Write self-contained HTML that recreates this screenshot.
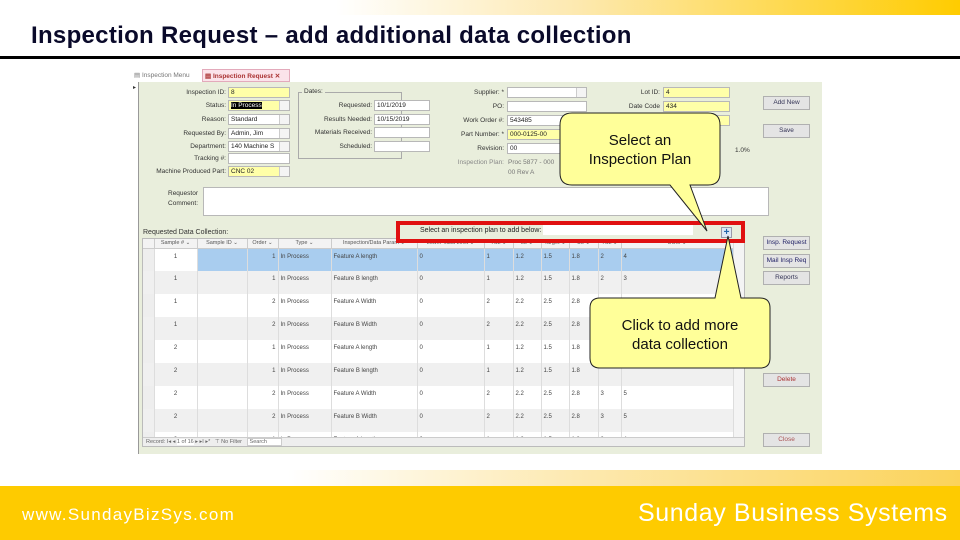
<!DOCTYPE html>
<html><head><meta charset="utf-8"><style>
*{margin:0;padding:0;box-sizing:border-box}
body{width:960px;height:540px;position:relative;overflow:hidden;background:#fff;font-family:"Liberation Sans",sans-serif}
.a{position:absolute}
.t{font-size:6.5px;color:#333;white-space:nowrap}
.f{position:absolute;height:11px;border:1px solid #b8b8b8;background:#fff;font-size:6.5px;line-height:9px;padding-left:2px;color:#222;white-space:nowrap;overflow:hidden}
.y{background:#ffffa8}
.l{position:absolute;font-size:6.5px;color:#333;text-align:right;white-space:nowrap}
.dd::after{content:"";position:absolute;right:0;top:0;width:9px;height:9px;border-left:1px solid #ccc;background:#f4f4f4}
.b{position:absolute;left:763px;width:47px;height:14px;background:#e4e4e4;border:1px solid #b0b0b0;font-size:6.5px;text-align:center;line-height:12px;color:#335}
table{border-collapse:collapse;table-layout:fixed}
td{height:23px;font-size:6px;color:#444;vertical-align:top;padding:5px 2px 0;border-right:1px solid #ddd;white-space:nowrap;overflow:hidden}
tr.g td{background:#f0f0f0}
tr.s td{background:#a9cdef}
th{height:9px;font-size:5.5px;font-weight:normal;color:#555;background:#f3f3f3;border-right:1px solid #ccc;border-bottom:1px solid #ccc;white-space:nowrap;overflow:hidden;padding:0 2px}
.r{text-align:right}
</style></head><body>
<div class="a" style="left:0;top:0;width:960px;height:15px;background:linear-gradient(90deg,#fff 0%,#fff 35%,#fde9b0 60%,#ffcc00 100%)"></div>
<div class="a" style="left:31px;top:22px;font-size:24px;font-weight:bold;color:#0a0a2a;letter-spacing:0.3px;white-space:nowrap">Inspection Request – add additional data collection</div>
<div class="a" style="left:0;top:56px;width:960px;height:3px;background:#000"></div>

<!-- screenshot -->
<div class="a" style="left:130px;top:68px;width:692px;height:387px;background:#fff"></div>
<div class="a" style="left:138px;top:82px;width:684px;height:372px;background:#e9eedc;border-left:1px solid #999"></div>
<div class="a t" style="left:133px;top:84px;font-size:6px">▸</div>
<div class="a t" style="left:134px;top:71px;color:#777">▤ Inspection Menu</div>
<div class="a" style="left:202px;top:69px;width:88px;height:13px;background:#fbe3ea;border:1px solid #e3aabb"></div>
<div class="a t" style="left:205px;top:72px;color:#a33;font-weight:bold">▤ Inspection Request  ✕</div>

<div class="l" style="left:140px;top:89px;width:86px">Inspection ID:</div><div class="f y" style="left:228px;top:87px;width:62px">8</div>
<div class="l" style="left:140px;top:102px;width:86px">Status:</div><div class="f y dd" style="left:228px;top:100px;width:62px"><span style="background:#000;color:#fff">In Process</span></div>
<div class="l" style="left:140px;top:116px;width:86px">Reason:</div><div class="f dd" style="left:228px;top:114px;width:62px">Standard</div>
<div class="l" style="left:140px;top:130px;width:86px">Requested By:</div><div class="f dd" style="left:228px;top:128px;width:62px">Admin, Jim</div>
<div class="l" style="left:140px;top:143px;width:86px">Department:</div><div class="f dd" style="left:228px;top:141px;width:62px">140 Machine S</div>
<div class="l" style="left:140px;top:155px;width:86px">Tracking #:</div><div class="f" style="left:228px;top:153px;width:62px"></div>
<div class="l" style="left:140px;top:168px;width:86px">Machine Produced Part:</div><div class="f y dd" style="left:228px;top:166px;width:62px">CNC 02</div>

<div class="a" style="left:298px;top:92px;width:104px;height:67px;border:1px solid #aaa"></div>
<div class="a t" style="left:302px;top:88px;background:#e9eedc;padding:0 2px">Dates:</div>
<div class="l" style="left:300px;top:102px;width:72px">Requested:</div><div class="f" style="left:374px;top:100px;width:56px">10/1/2019</div>
<div class="l" style="left:300px;top:116px;width:72px">Results Needed:</div><div class="f" style="left:374px;top:114px;width:56px">10/15/2019</div>
<div class="l" style="left:300px;top:129px;width:72px">Materials Received:</div><div class="f" style="left:374px;top:127px;width:56px"></div>
<div class="l" style="left:300px;top:143px;width:72px">Scheduled:</div><div class="f" style="left:374px;top:141px;width:56px"></div>

<div class="l" style="left:440px;top:89px;width:64px">Supplier: *</div><div class="f dd" style="left:507px;top:87px;width:80px"></div>
<div class="l" style="left:440px;top:103px;width:64px">PO:</div><div class="f" style="left:507px;top:101px;width:80px"></div>
<div class="l" style="left:440px;top:117px;width:64px">Work Order #:</div><div class="f" style="left:507px;top:115px;width:56px">543485</div>
<div class="l" style="left:440px;top:131px;width:64px">Part Number: *</div><div class="f y" style="left:507px;top:129px;width:56px">000-0125-00</div>
<div class="l" style="left:440px;top:145px;width:64px">Revision:</div><div class="f" style="left:507px;top:143px;width:56px">00</div>
<div class="l" style="left:440px;top:159px;width:64px;color:#888">Inspection Plan:</div><div class="a t" style="left:508px;top:158px;color:#777;line-height:10px">Proc 5877 - 000<br>00 Rev A</div>

<div class="l" style="left:600px;top:89px;width:60px">Lot ID:</div><div class="f y" style="left:663px;top:87px;width:67px">4</div>
<div class="l" style="left:600px;top:103px;width:60px">Date Code</div><div class="f y" style="left:663px;top:101px;width:67px">434</div>
<div class="f y" style="left:663px;top:115px;width:67px"></div>
<div class="a t" style="left:735px;top:147px">1.0%</div>

<div class="l" style="left:140px;top:189px;width:58px;line-height:10px">Requestor<br>Comment:</div>
<div class="f" style="left:203px;top:187px;width:566px;height:29px"></div>
<div class="a t" style="left:143px;top:229px;font-size:7px">Requested Data Collection:</div>

<div class="b" style="top:96px">Add New</div>
<div class="b" style="top:124px">Save</div>
<div class="b" style="top:236px;color:#226">Insp. Request</div>
<div class="b" style="top:254px;color:#226">Mail Insp Req</div>
<div class="b" style="top:271px">Reports</div>
<div class="b" style="top:373px;color:#a33">Delete</div>
<div class="b" style="top:433px;color:#a55">Close</div>

<!-- table -->
<div class="a" style="left:142px;top:238px;width:603px;height:209px;background:#fff;border:1px solid #bbb;overflow:hidden">
<table style="width:590px">
<colgroup><col style="width:11px"><col style="width:43px"><col style="width:50px"><col style="width:31px"><col style="width:53px"><col style="width:86px"><col style="width:67px"><col style="width:29px"><col style="width:28px"><col style="width:28px"><col style="width:29px"><col style="width:23px"><col style="width:112px"></colgroup>
<tr><th></th><th>Sample # ⌄</th><th>Sample ID ⌄</th><th>Order ⌄</th><th>Type ⌄</th><th>Inspection/Data Param ⌄</th><th>Lower Valid Limit ⌄</th><th>TSL ⌄</th><th>LL ⌄</th><th>Target ⌄</th><th>UL ⌄</th><th>TSL ⌄</th><th>UOM ⌄</th></tr>
<tr class="s"><td style="background:#eee"></td><td class="r" style="background:#fff;text-align:center">1</td><td></td><td class="r">1</td><td>In Process</td><td>Feature A length</td><td>0</td><td>1</td><td>1.2</td><td>1.5</td><td>1.8</td><td>2</td><td>4</td></tr>
<tr class="g"><td></td><td style="text-align:center">1</td><td></td><td class="r">1</td><td>In Process</td><td>Feature B length</td><td>0</td><td>1</td><td>1.2</td><td>1.5</td><td>1.8</td><td>2</td><td>3</td></tr>
<tr><td style="background:#eee"></td><td style="text-align:center">1</td><td></td><td class="r">2</td><td>In Process</td><td>Feature A Width</td><td>0</td><td>2</td><td>2.2</td><td>2.5</td><td>2.8</td><td></td><td></td></tr>
<tr class="g"><td></td><td style="text-align:center">1</td><td></td><td class="r">2</td><td>In Process</td><td>Feature B Width</td><td>0</td><td>2</td><td>2.2</td><td>2.5</td><td>2.8</td><td></td><td></td></tr>
<tr><td style="background:#eee"></td><td style="text-align:center">2</td><td></td><td class="r">1</td><td>In Process</td><td>Feature A length</td><td>0</td><td>1</td><td>1.2</td><td>1.5</td><td>1.8</td><td></td><td></td></tr>
<tr class="g"><td></td><td style="text-align:center">2</td><td></td><td class="r">1</td><td>In Process</td><td>Feature B length</td><td>0</td><td>1</td><td>1.2</td><td>1.5</td><td>1.8</td><td></td><td></td></tr>
<tr><td style="background:#eee"></td><td style="text-align:center">2</td><td></td><td class="r">2</td><td>In Process</td><td>Feature A Width</td><td>0</td><td>2</td><td>2.2</td><td>2.5</td><td>2.8</td><td>3</td><td>5</td></tr>
<tr class="g"><td></td><td style="text-align:center">2</td><td></td><td class="r">2</td><td>In Process</td><td>Feature B Width</td><td>0</td><td>2</td><td>2.2</td><td>2.5</td><td>2.8</td><td>3</td><td>5</td></tr>
<tr><td style="background:#eee"></td><td style="text-align:center">3</td><td></td><td class="r">1</td><td>In Process</td><td>Feature A length</td><td>0</td><td>1</td><td>1.2</td><td>1.5</td><td>1.8</td><td>2</td><td>4</td></tr>
</table>
<div class="a" style="right:0;top:0;width:11px;height:198px;background:#f4f4f4;border-left:1px solid #ddd"></div>
<div class="a" style="left:0;top:198px;width:603px;height:11px;background:#eee;border-top:1px solid #ccc"></div>
<div class="a t" style="left:3px;top:200px;font-size:5.5px;color:#666">Record: I◂ ◂ <span style="background:#fff">1 of 16</span> ▸ ▸I ▸* &nbsp; ⊤ No Filter &nbsp; <span style="background:#fff;border:1px solid #ccc;padding:0 14px 0 2px">Search</span></div>
</div>

<!-- red box -->
<div class="a" style="left:396px;top:221px;width:349px;height:22px;border:4px solid #e01010"></div>
<div class="f" style="left:400px;top:225px;width:341px;height:14px;background:#e9eedc;border:none;font-size:7px;line-height:12px;padding-left:20px">Select an inspection plan to add below: <span style="display:inline-block;width:150px;height:10px;background:#fff;vertical-align:middle"></span></div>
<div class="a" style="left:721px;top:227px;width:11px;height:11px;border:1px solid #99a;background:#dde8f5;color:#26a;font-size:10px;line-height:9px;text-align:center;font-weight:bold">+</div>

<!-- callouts -->
<svg class="a" style="left:0;top:0" width="960" height="540">
<path d="M572 113 H708 Q720 113 720 125 V173 Q720 185 708 185 H690 L707 231 L670 185 H572 Q560 185 560 173 V125 Q560 113 572 113 Z" fill="#ffff99" stroke="#222" stroke-width="1"/>
<path d="M600 298 H715 L728 236 L741 298 H760 Q770 298 770 308 V358 Q770 368 760 368 H600 Q590 368 590 358 V308 Q590 298 600 298 Z" fill="#ffff99" stroke="#222" stroke-width="1"/>
</svg>
<div class="a" style="left:560px;top:131px;width:160px;text-align:center;font-size:15px;line-height:19px;color:#111">Select an<br>Inspection Plan</div>
<div class="a" style="left:590px;top:316px;width:180px;text-align:center;font-size:15px;line-height:19px;color:#111">Click to add more<br>data collection</div>

<!-- footer -->
<div class="a" style="left:0;top:470px;width:960px;height:16px;background:linear-gradient(90deg,#fff 0%,#fff 30%,#fde9b0 60%,#fbd35a 100%)"></div>
<div class="a" style="left:0;top:486px;width:960px;height:54px;background:#fecb00"></div>
<div class="a" style="left:22px;top:505px;font-size:17px;letter-spacing:1.3px;color:#fff;white-space:nowrap">www.SundayBizSys.com</div>
<div class="a" style="left:638px;top:499px;font-size:25px;letter-spacing:0.6px;color:#fff;white-space:nowrap">Sunday Business Systems</div>
</body></html>
